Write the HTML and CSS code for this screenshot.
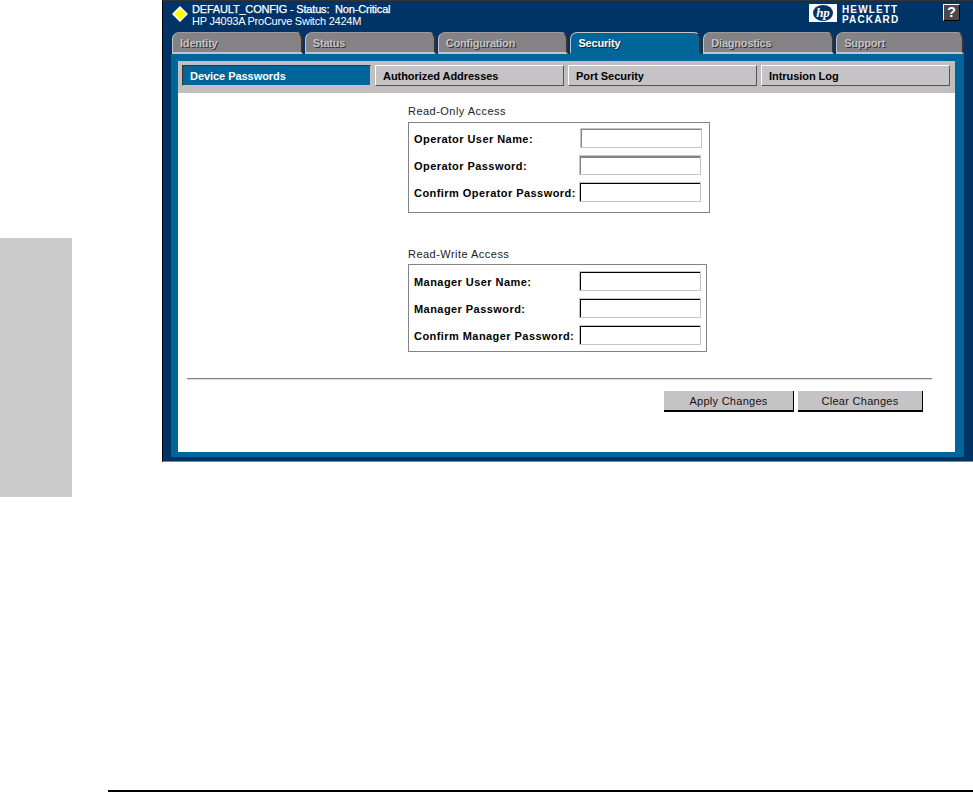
FILE: index.html
```html
<!DOCTYPE html>
<html lang="en">
<head>
<meta charset="utf-8">
<title>Device Passwords</title>
<link rel="stylesheet" href="styles.css">
</head>
<body>
<div class="page">
  <div class="top">
    <div class="thumb"></div>
    <div class="window">
      <header class="header">
        <svg class="diamond" width="16" height="16" viewBox="0 0 16 16"><polygon points="8,1 15,8 8,15 1,8" fill="#ffff00" stroke="#ffffff" stroke-width="1.5"/></svg>
        <div class="status">
          <div class="status-main">DEFAULT_CONFIG - Status:&nbsp; Non-Critical</div>
          <div class="status-sub">HP J4093A ProCurve Switch 2424M</div>
        </div>
        <svg class="hp-logo" width="28" height="18" viewBox="0 0 28 18"><rect width="28" height="18" fill="#ffffff"/><ellipse cx="14" cy="9" rx="10" ry="8" fill="#003366"/><text x="14" y="13" text-anchor="middle" class="hp-mark">hp</text></svg>
        <div class="hp-name"><span>HEWLETT</span><span>PACKARD</span></div>
        <div class="help">?</div>
      </header>
      <nav class="tabs">
        <div class="tab">Identity</div>
        <div class="tab">Status</div>
        <div class="tab">Configuration</div>
        <div class="tab tab-active">Security</div>
        <div class="tab">Diagnostics</div>
        <div class="tab tab-last">Support</div>
      </nav>
      <div class="frame">
        <div class="subtabs">
          <div class="subtab subtab-active">Device Passwords</div>
          <div class="subtab">Authorized Addresses</div>
          <div class="subtab">Port Security</div>
          <div class="subtab">Intrusion Log</div>
        </div>
        <main class="panel">
          <section class="group group-first">
            <div class="legend">Read-Only Access</div>
            <div class="box box-ro">
              <div class="row"><label class="field-label">Operator User Name:</label><input class="input input-soft input-shift" type="text"></div>
              <div class="row"><label class="field-label">Operator Password:</label><input class="input input-mid" type="password"></div>
              <div class="row"><label class="field-label">Confirm Operator Password:</label><input class="input" type="password"></div>
            </div>
          </section>
          <section class="group group-second">
            <div class="legend">Read-Write Access</div>
            <div class="box box-rw">
              <div class="row"><label class="field-label">Manager User Name:</label><input class="input" type="text"></div>
              <div class="row"><label class="field-label">Manager Password:</label><input class="input" type="password"></div>
              <div class="row"><label class="field-label">Confirm Manager Password:</label><input class="input" type="password"></div>
            </div>
          </section>
          <div class="divider"></div>
          <div class="actions">
            <button class="btn btn-apply" type="button">Apply Changes</button>
            <button class="btn btn-clear" type="button">Clear Changes</button>
          </div>
        </main>
      </div>
    </div>
  </div>
  <div class="foot-rule"></div>
</div>
</body>
</html>
```
FILE: styles.css
```css
* { box-sizing: border-box; }
html, body { margin: 0; padding: 0; background: #ffffff; }
body { font-family: "Liberation Sans", Arial, sans-serif; font-size: 11px; color: #000; overflow: hidden; }
.page { width: 973px; height: 792px; }
.top { display: flex; align-items: flex-start; height: 497px; }
.thumb { width: 72px; height: 259px; margin-top: 238px; background: #cccccc; flex: none; }
.window {
  margin-left: 90px; width: 811px; height: 462px; flex: none;
  display: flex; flex-direction: column;
  background: #003366;
  border-left: 1px solid #000;
  border-top: 1px solid #333;
  border-bottom: 1px solid #77889a;
  padding: 0 9px 4px 8px;
}
.header { height: 31px; display: flex; align-items: flex-start; color: #fff; flex: none; position: relative; }
.diamond { margin: 5px 0 0 1px; flex: none; }
.status { margin-left: 4px; margin-top: 2px; width: 400px; }
.status-main { line-height: 12px; letter-spacing: -.18px; -webkit-text-stroke: .25px #fff; white-space: nowrap; }
.status-sub { line-height: 12px; letter-spacing: -.24px; white-space: nowrap; }
.hp-logo { margin: 3px 0 0 217px; flex: none; }
.hp-mark { font: italic 700 13px "Liberation Serif", serif; fill: #fff; }
.hp-name { margin: 4px 0 0 5px; width: 101px; display: flex; flex-direction: column; font-weight: 700; font-size: 10px; line-height: 10px; letter-spacing: 1.15px; flex: none; }
.help {
  margin-top: 3px; width: 17px; height: 17px; flex: none;
  background: #4a4a4a; border: 1px solid; border-color: #fff #000 #000 #fff;
  color: #fff; font-weight: 700; font-size: 14px; line-height: 15px; text-align: center;
}
.tabs { display: flex; gap: 2px; height: 22px; padding-left: 1px; flex: none; }
.tab {
  width: 131px; height: 22px; padding: 4px 0 0 7px;
  background: #848284;
  border: 1px solid; border-color: #9c9a9c #333 #c6c3c6 #c6c3c6;
  border-bottom-width: 2px; border-right-width: 2px;
  border-radius: 7px 7px 0 0;
  color: #c6c3c6; font-weight: 700; line-height: 12px; letter-spacing: -.2px;
  text-shadow: 1px 1px 0 #333;
}
.tab-last { width: 128px; }
.tab-active { background: #006699; color: #fff; border-color: #c6c3c6 #333 #006699 #c6c3c6; text-shadow: 1px 1px 0 #222; }
.frame { flex: 1; display: flex; flex-direction: column; background: #006699; padding: 7px 9px 5px 7px; min-height: 0; }
.subtabs { height: 32px; flex: none; display: flex; gap: 4px; padding: 4px 0 0 4px; background: #c0bebf; }
.subtab {
  width: 189px; height: 21px; padding: 0 0 0 7px;
  background: #c6c3c6; border: 1px solid; border-color: #fff #555 #555 #fff;
  font-weight: 700; line-height: 20px; letter-spacing: -.05px;
}
.subtab-active { background: #006699; color: #fff; border-color: #333 #c6c3c6 #c6c3c6 #333; }
.panel { flex: 1; background: #fff; padding-left: 230px; position: relative; }
.group-first { padding-top: 11px; }
.group-second { padding-top: 34px; }
.legend { line-height: 14px; margin-bottom: 4px; letter-spacing: .47px; color: #222; }
.group-second .legend { margin-bottom: 3px; }
.box { border: 1px solid #848284; display: flex; flex-direction: column; gap: 7px; padding-left: 5px; }
.box-ro { width: 302px; height: 91px; padding-top: 5px; }
.box-rw { width: 299px; height: 88px; padding-top: 6px; }
.row { display: flex; align-items: center; justify-content: space-between; height: 20px; }
.box-ro .row { padding-right: 8px; }
.box-rw .row { padding-right: 5px; }
.field-label { font-weight: 700; letter-spacing: .44px; white-space: nowrap; margin-top: 2px; }
.input {
  width: 122px; height: 20px; padding: 0; margin: 0; background: #fff; outline: none;
  border: 1px solid #c6c3c6;
  box-shadow: inset 1px 1px 0 #000;
}
.input-soft { box-shadow: inset 1px 1px 0 #848284; }
.input-mid { box-shadow: inset 1px 2px 0 #848284, inset 1px 0 0 #000; }
.input-shift { margin-right: -1px; }
.divider { margin: 26px 0 0 -221px; width: 745px; height: 2px; border-bottom: 1px solid #dedede; border-top: 1px solid #848284; }
.actions { margin: 11px 0 0 -221px; width: 736px; display: flex; justify-content: flex-end; gap: 4px; }
.btn {
  height: 21px; padding: 0; background: #c6c3c6; color: #111;
  border: 1px solid; border-color: #e8e8e8 #000 #000 #e8e8e8;
  border-width: 0 1px 2px 0;
  font: 400 11px/18px "Liberation Sans", Arial, sans-serif; letter-spacing: .28px;
}
.btn-apply { width: 130px; }
.btn-clear { width: 125px; }
.foot-rule { margin: 293px 0 0 108px; height: 2px; background: #000; }
```
